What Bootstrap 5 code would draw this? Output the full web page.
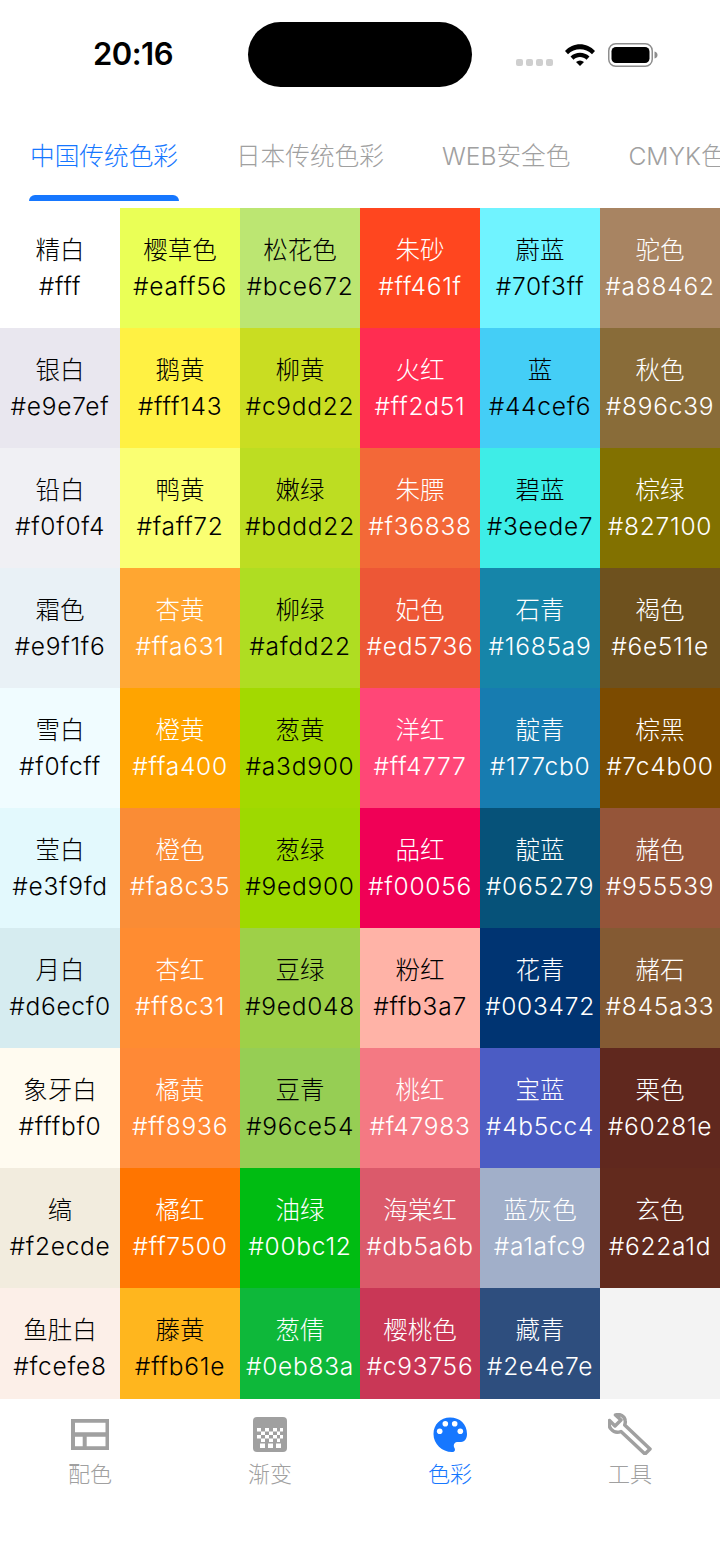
<!DOCTYPE html>
<html lang="zh">
<head>
  <meta charset="UTF-8" />
  <meta name="viewport" content="width=device-width, initial-scale=1.0"/>
  <title>色彩</title>
  <link href="https://cdn.jsdelivr.net/npm/bootstrap@5.3.3/dist/css/bootstrap.min.css" rel="stylesheet">
  <style>
    html, body {
      height: 100%;
      margin: 0;
      overflow: hidden;
    }
    body {
      background: #fff;
      font-family: Inter, "Noto Sans CJK SC", sans-serif;
      color: #111;
    }
    .app-page {
      width: 720px;
      height: 1558px;
    }
    .status-bar {
      height: 104px;
      padding-top: 22px;
    }
    .status-time {
      width: 248px;
      padding-top: 14px;
      padding-left: 18px;
      font-size: 31px;
      font-weight: 600;
      line-height: 36px;
      letter-spacing: -.5px;
      color: #000;
    }
    .status-island {
      width: 224px;
      height: 65px;
      border-radius: 33px;
      background: #000;
    }
    .status-icons {
      padding: 21px 0 0 44px;
    }
    .signal-dots {
      gap: 3px;
      margin-top: 16px;
      margin-right: 12px;
    }
    .signal-dots i {
      width: 7px;
      height: 7px;
      border-radius: 2px;
      background: #cfcfcf;
    }
    .wifi-icon {
      margin-top: 1px;
      margin-right: 13px;
    }
    .tab-strip {
      height: 97px;
      padding-left: 30px;
      gap: 58px;
      white-space: nowrap;
    }
    .tab-item {
      position: relative;
      height: 97px;
      padding-top: 34px;
      font-size: 24.67px;
      font-weight: 300;
      line-height: 36px;
      color: #a0a0a0;
    }
    .tab-item.is-active {
      color: #1677ff;
    }
    .tab-item.is-active::after {
      content: "";
      position: absolute;
      left: -1px;
      right: -1px;
      bottom: 0;
      height: 6px;
      border-radius: 6px 6px 0 0;
      background: #1677ff;
    }
    .swatch-grid {
      margin-top: 7px;
      height: 1191px;
      display: grid;
      grid-template-columns: repeat(6, 120px);
      grid-template-rows: repeat(10, 120px);
      grid-auto-flow: column;
      overflow: hidden;
    }
    .swatch {
      padding-top: 24px;
      font-size: 24.5px;
      font-weight: 300;
      line-height: 36px;
      text-align: center;
      white-space: nowrap;
    }
    .swatch-hex {
      display: block;
      letter-spacing: .75px;
    }
    .swatch-dark { color: #000; }
    .swatch-light { color: #fff; }
    .swatch-empty { background: #f3f3f3; }
    .tabbar {
      height: 159px;
    }
    .tabbar-item {
      width: 180px;
      padding-top: 14px;
      font-size: 22px;
      font-weight: 300;
      line-height: 30px;
      color: #a0a0a0;
    }
    .tabbar-item.is-active {
      color: #1677ff;
    }
    .tabbar-icon {
      height: 42px;
      margin-bottom: 4px;
    }
  </style>
</head>
<body>
<div class="app-page d-flex flex-column">

  <div class="status-bar d-flex">
    <div class="status-time text-center">20:16</div>
    <div class="status-island"></div>
    <div class="status-icons d-flex align-items-start">
      <div class="signal-dots d-flex"><i></i><i></i><i></i><i></i></div>
      <svg width="30" height="22" viewBox="0 0 30 22" class="wifi-icon">
        <path d="M0 7C8-2 22-2 30 7l-3 3.200C20.500 3.500 9.500 3.500 3 10.200z" fill="#000"/>
        <path d="M5.500 12.500C11 7.500 19 7.500 24.500 12.500l-3 3.200C18 12 12 12 8.500 15.700z" fill="#000"/>
        <path d="M11 18c2.500-2 5.500-2 8 0l-4 4z" fill="#000"/>
      </svg>
      <svg width="50" height="24" viewBox="0 0 50 24">
        <rect x=".75" y=".75" width="43.500" height="22.500" rx="7" fill="none" stroke="#8e8e8e" stroke-width="1.500"/>
        <rect x="3.500" y="4" width="38" height="16" rx="4.500" fill="#000"/>
        <path d="M46.500 8.500c2 .4 3 1.900 3 3.500s-1 3.100-3 3.500z" fill="#8e8e8e"/>
      </svg>
    </div>
  </div>

  <div class="tab-strip d-flex overflow-hidden">
    <div class="tab-item is-active">中国传统色彩</div>
    <div class="tab-item">日本传统色彩</div>
    <div class="tab-item">WEB安全色</div>
    <div class="tab-item">CMYK色彩</div>
  </div>

  <div class="swatch-grid" id="swatches"></div>

  <div class="tabbar d-flex">
    <div class="tabbar-item d-flex flex-column align-items-center">
      <div class="tabbar-icon d-flex align-items-center">
        <svg width="38" height="31" viewBox="0 0 38 31">
          <path d="M0 0h38v31H0zM4 3.700v9.600h30.500V3.700zM4 17.700v9.600h7.700v-9.600zM15.700 17.700v9.600h18.800v-9.600z" fill="#a0a0a0" fill-rule="evenodd"/>
        </svg>
      </div>
      配色
    </div>
    <div class="tabbar-item d-flex flex-column align-items-center">
      <div class="tabbar-icon d-flex align-items-center">
        <svg width="34" height="35" viewBox="0 0 34 35">
          <rect width="34" height="35" rx="4" fill="#a0a0a0"/>
          <path d="M4 11h4v3.500H4zM12 11h4v3.500h-4zM20 11h4v3.500h-4zM27 11h3v3.500h-3zM8 14.500h4V18H8zM16 14.500h4V18h-4zM24 14.500h3V18h-3zM4 18h4v3.500H4zM12 18h4v3.500h-4zM20 18h4v3.500h-4zM27 18h3v3.500h-3zM8 21.500h4V25H8zM16 21.500h4V25h-4zM24 21.500h3V25h-3zM7 26.500h5V31H7zM15 26.500h5V31h-5zM23 26.500h5V31h-5z" fill="#fff"/>
        </svg>
      </div>
      渐变
    </div>
    <div class="tabbar-item is-active d-flex flex-column align-items-center">
      <div class="tabbar-icon d-flex align-items-center">
        <svg width="34" height="35" viewBox="0 0 34 35">
          <path d="M17 .5C7.500.5.500 7.500.5 17c0 10 8.500 18 18.500 18 3 0 3.500-2 2.500-4-1.500-2.500-.5-5.500 2.500-6h4c4 0 6-4 6-8C34 7 27 .5 17 .5z" fill="#1677ff"/>
          <g fill="#fff">
            <circle cx="6.700" cy="14.300" r="2.800"/>
            <circle cx="12.300" cy="6.700" r="2.800"/>
            <circle cx="21.700" cy="6.700" r="2.800"/>
            <circle cx="27.300" cy="14.300" r="2.800"/>
          </g>
        </svg>
      </div>
      色彩
    </div>
    <div class="tabbar-item d-flex flex-column align-items-center">
      <div class="tabbar-icon d-flex align-items-center">
        <svg width="44" height="42" viewBox="4 3 44 42">
          <path d="M11.500 5C16 3.500 20.500 6 21.200 10.500c.3 1.500 0 3-.5 4.500l25.300 24-5 5-24-22.500c-3.500 1.500-7.500.5-10-2.500C5 16.500 4.500 13.500 5.500 10.500L11 16l6-6z" fill="none" stroke="#a0a0a0" stroke-width="3.500" stroke-linejoin="round"/>
        </svg>
      </div>
      工具
    </div>
  </div>
</div>

<script>
  // [名称, 色值, 是否白字]，按列排
  var colors = [
    ['精白','#fff',0],['银白','#e9e7ef',0],['铅白','#f0f0f4',0],['霜色','#e9f1f6',0],['雪白','#f0fcff',0],
    ['莹白','#e3f9fd',0],['月白','#d6ecf0',0],['象牙白','#fffbf0',0],['缟','#f2ecde',0],['鱼肚白','#fcefe8',0],
    ['樱草色','#eaff56',0],['鹅黄','#fff143',0],['鸭黄','#faff72',0],['杏黄','#ffa631',1],['橙黄','#ffa400',1],
    ['橙色','#fa8c35',1],['杏红','#ff8c31',1],['橘黄','#ff8936',1],['橘红','#ff7500',1],['藤黄','#ffb61e',0],
    ['松花色','#bce672',0],['柳黄','#c9dd22',0],['嫩绿','#bddd22',0],['柳绿','#afdd22',0],['葱黄','#a3d900',0],
    ['葱绿','#9ed900',0],['豆绿','#9ed048',0],['豆青','#96ce54',0],['油绿','#00bc12',1],['葱倩','#0eb83a',1],
    ['朱砂','#ff461f',1],['火红','#ff2d51',1],['朱膘','#f36838',1],['妃色','#ed5736',1],['洋红','#ff4777',1],
    ['品红','#f00056',1],['粉红','#ffb3a7',0],['桃红','#f47983',1],['海棠红','#db5a6b',1],['樱桃色','#c93756',1],
    ['蔚蓝','#70f3ff',0],['蓝','#44cef6',0],['碧蓝','#3eede7',0],['石青','#1685a9',1],['靛青','#177cb0',1],
    ['靛蓝','#065279',1],['花青','#003472',1],['宝蓝','#4b5cc4',1],['蓝灰色','#a1afc9',1],['藏青','#2e4e7e',1],
    ['驼色','#a88462',1],['秋色','#896c39',1],['棕绿','#827100',1],['褐色','#6e511e',1],['棕黑','#7c4b00',1],
    ['赭色','#955539',1],['赭石','#845a33',1],['栗色','#60281e',1],['玄色','#622a1d',1]
  ];
  var box = document.getElementById('swatches');
  colors.forEach(function (c) {
    var el = document.createElement('div');
    el.className = 'swatch ' + (c[2] ? 'swatch-light' : 'swatch-dark');
    el.style.background = c[1];
    el.innerHTML = c[0] + '<span class="swatch-hex">' + c[1] + '</span>';
    box.appendChild(el);
  });
  var empty = document.createElement('div');
  empty.className = 'swatch-empty';
  box.appendChild(empty);
</script>
<script src="https://cdn.jsdelivr.net/npm/bootstrap@5.3.3/dist/js/bootstrap.bundle.min.js"></script>
</body>
</html>
